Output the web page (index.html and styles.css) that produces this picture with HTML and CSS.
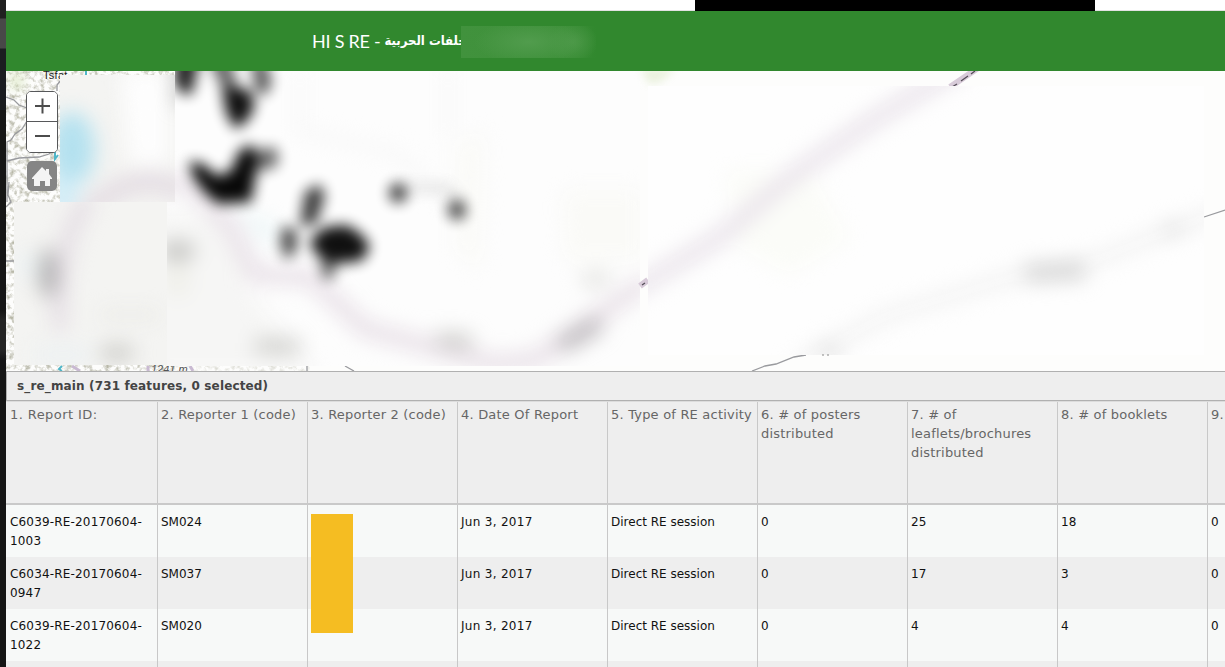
FILE: index.html
```html
<!DOCTYPE html>
<html lang="en">
<head>
<meta charset="utf-8">
<title>HI S RE</title>
<link rel="stylesheet" href="styles.css">
</head>
<body>
<div class="shell">
  <aside class="edge"></aside>
  <main class="app">
    <div class="topstrip"><div class="topstrip-block"></div></div>
    <header class="banner">
      <h1 class="title"><span class="title-latin">HI S RE -</span><span class="title-arabic" dir="rtl" lang="ar">خلفات الحربية</span></h1>
      <div class="title-haze"></div>
    </header>
    <section class="map">
      <svg class="map-canvas" viewBox="6 71 1219 300" color-interpolation-filters="sRGB" aria-hidden="true">
        <defs>
          <filter id="b3" x="-50%" y="-50%" width="200%" height="200%"><feGaussianBlur stdDeviation="4"/></filter>
          <filter id="b5" filterUnits="userSpaceOnUse" x="100" y="0" width="450" height="350"><feGaussianBlur stdDeviation="7"/></filter>
          <filter id="b9" filterUnits="userSpaceOnUse" x="-50" y="0" width="1400" height="450"><feGaussianBlur stdDeviation="10"/></filter>
          <filter id="terrain" x="0" y="0" width="100%" height="100%">
            <feTurbulence type="fractalNoise" baseFrequency=".2" numOctaves="4" seed="7"/>
            <feColorMatrix values="0 0 0 0 .72  0 0 0 0 .72  0 0 0 0 .66  2.6 0 0 0 -1.15"/>
          </filter>
          <clipPath id="upper"><path d="M60 75H175V202H60z"/></clipPath>
          <clipPath id="lower"><path d="M14 202H167V365H14z"/></clipPath>
          <clipPath id="mid"><path d="M175 71H640V366H167V202H175z"/></clipPath>
          <clipPath id="east"><path d="M648 86H1204V355H648z"/></clipPath>
        </defs>
        <path fill="#fdfdfc" d="M6 71H1225V371H6z"/>
        <path filter="url(#terrain)" d="M6 71H175V371H6z"/>
        <path filter="url(#terrain)" opacity=".45" d="M167 365H310V371H167z"/>
        <path fill="#dce8c4" opacity=".55" filter="url(#b3)" d="M8 71H25V90H8z"/>
        <g fill="none" stroke="#999a9e" stroke-width="1.3">
          <path d="M6 97l8 3 5 5 8 3M27 121l-5 8-7 5-4 6-4 2v60M7 161l12-3 20-1 10-3 6-6M61 80l-4 5v6M9 182l-1 13 3 7-5 5M6 261h8M345 366l9 5M307 366v5M752 371l13-5 11-2 18-7 12-2M1204 217l21-7"/>
        </g>
        <path fill="none" stroke="#4fb6c8" stroke-width="2" d="M86 71v5M55 152v7l3-4M62 366l-3 3 3 2"/>
        <path d="M72 366l8 5M148 366v5M190 366l3 5" stroke="#c9bad2" stroke-width="3"/>
        <text class="map-town" x="43" y="79">Tsfat</text>
        <text class="map-height" x="151" y="373">1241 m</text>

        <g clip-path="url(#upper)">
          <path fill="#f4f4f2" d="M60 75H175V202H60z"/>
          <g filter="url(#b9)">
            <path fill="#fdfdfd" d="M120 70H170V165H130z"/>
            <ellipse cx="72" cy="149" rx="23" ry="37" fill="#b4e1ef"/>
            <path d="M50 177H82L71 220H50z" fill="#cfecf7"/>
            <path d="M84 215Q135 162 190 194" fill="none" stroke="#e2dae1" stroke-width="17"/>
            <path d="M181 60v45" stroke="#999" stroke-width="8"/>
          </g>
        </g>
        <g clip-path="url(#lower)">
          <path fill="#f4f4f2" d="M0 202H167V365H0z"/>
          <g filter="url(#b9)">
            <path d="M90 198Q55 240 60 330" fill="none" stroke="#e2dae2" stroke-width="13"/>
            <ellipse cx="48" cy="273" rx="9" ry="25" fill="#adadad"/>
            <ellipse cx="28" cy="265" rx="14" ry="13" fill="#edf2f3"/>
            <ellipse cx="117" cy="353" rx="18" ry="9" fill="#cdcdc9"/>
            <path d="M35 345H90V365H35z" fill="#edf1f2"/>
            <path d="M100 315H160" stroke="#e8e8e3" stroke-width="8"/>
          </g>
        </g>
        <g clip-path="url(#mid)">
          <path fill="#fdfdfd" d="M167 71H640V366H167z"/>
          <g filter="url(#b9)">
            <path fill="#f6f6f5" d="M150 210L225 215 250 290 320 375H150z"/>
            <path d="M160 177L195 190 230 225 255 275 310 277 365 329 495 364 535 360 648 281" fill="none" stroke="#e8e0e7" stroke-width="16"/>
            <path fill="#eef7f8" d="M230 205L280 225 270 250z"/>
            <ellipse cx="178" cy="251" rx="17" ry="10" fill="#c2c2bf"/>
            <ellipse cx="178" cy="280" rx="12" ry="18" fill="#efefe9"/>
            <path d="M255 346h45M437 339l35 3" stroke="#cececb" stroke-width="14"/>
            <path d="M560 346l40-23" stroke="#bbb7bb" stroke-width="16"/>
            <ellipse cx="596" cy="279" rx="15" ry="8" fill="#e2e2df"/>
            <path fill="#fafaf7" d="M455 145L485 130 480 270 455 250zM563 190H642V260H565z"/>
            <path d="M300 72v60l95 20 60 55M448 72v65" fill="none" stroke="#f7f7f7" stroke-width="7"/>
          </g>
          <g filter="url(#b5)" fill="#000" opacity=".97">
            <path opacity=".9" d="M176 55H200L192 94 182 94 174 82z"/>
            <path opacity=".65" d="M207 55H229L238 90 222 88z"/>
            <path opacity=".68" d="M251 58H264L272 82 266 95 256 93z"/>
            <path opacity=".97" d="M222 88L249 89 255 106 247 121 235 129 226 113z"/>
            <path d="M189 161L203 164 217 176 231 171 239 151 251 144 258 162 251 202 218 204 205 193 193 177z"/>
            <path opacity=".6" d="M252 150L276 147 279 163 267 171 254 167z"/>
            <path opacity=".8" d="M305 192L319 184 325 195 316 224 300 226z"/>
            <path opacity=".72" d="M283 225L297 231 297 250 286 260 280 244z"/>
            <path opacity=".97" d="M310 240L325 227 347 225 361 234 370 246 363 260 346 263 327 261 314 252z"/>
            <path opacity=".6" d="M320 258H340L331 281 322 277z"/>
            <ellipse cx="398" cy="193" rx="9" ry="10" opacity=".78"/>
            <ellipse cx="457" cy="210" rx="9" ry="10" opacity=".74"/>
            <path d="M403 188h45l9 12" fill="none" stroke="#777" stroke-width="6" opacity=".25"/>
          </g>
        </g>
        <path fill="#dde9c9" opacity=".6" filter="url(#b3)" d="M640 68h36l-15 14-12 2z"/>
        <path d="M640 286l8-6M950 87l28-19" stroke="#d8cbd9" stroke-width="6"/>
        <path d="M642 285l3-2M952 87l5-3M961 81l7-5M971 74l4-3" stroke="#554e58" stroke-width="1.3"/>
        <g clip-path="url(#east)">
          <path fill="#fefefe" d="M648 86H1204V355H648z"/>
          <g filter="url(#b9)">
            <path fill="#fbfcf8" d="M725 170H810L850 240 790 275 735 245z"/>
            <path d="M610 304L720 237 792 176 875 119 965 65" fill="none" stroke="#eae4eb" stroke-width="17"/>
            <path d="M795 365L885 316 1010 278 1090 262 1225 209" fill="none" stroke="#f3f3f3" stroke-width="14"/>
            <path d="M1025 273l60-3" stroke="#d7d7d7" stroke-width="19"/>
            <ellipse cx="1173" cy="229" rx="12" ry="7" fill="#e1e1e1"/>
            <ellipse cx="829" cy="351" rx="12" ry="7" fill="#dedede"/>
          </g>
        </g>
        <path d="M823 354v2M828 354v2" stroke="#888"/>
      </svg>
      <div class="controls">
        <div class="zoom">
          <button class="zoom-btn" aria-label="Zoom in"><svg width="30" height="30"><path d="M8 14h15M15.5 6.5v15"/></svg></button>
          <button class="zoom-btn" aria-label="Zoom out"><svg width="30" height="30"><path d="M8 14h15"/></svg></button>
        </div>
        <button class="home" aria-label="Default extent"><svg width="30" height="30"><path d="M15 6l4 4V8h3v5l3 4v1h-2v7h-5v-5h-5v5H7v-7H5v-1z"/></svg></button>
      </div>
    </section>
    <section class="features">
      <div class="caption">s_re_main (731 features, 0 selected)</div>
      <div class="row head">
        <div class="cell">1. Report ID:</div><div class="cell">2. Reporter 1 (code)</div><div class="cell">3. Reporter 2 (code)</div><div class="cell">4. Date Of Report</div><div class="cell">5. Type of RE activity</div><div class="cell">6. # of posters<br>distributed</div><div class="cell">7. # of<br>leaflets/brochures<br>distributed</div><div class="cell">8. # of booklets</div><div class="cell">9.</div>
      </div>
      <div class="body">
        <div class="row">
          <div class="cell id">C6039-RE-20170604-<br>1003</div><div class="cell">SM024</div><div class="cell"></div><div class="cell date">Jun 3, 2017</div><div class="cell">Direct RE session</div><div class="cell">0</div><div class="cell">25</div><div class="cell">18</div><div class="cell">0</div>
        </div>
        <div class="row alt">
          <div class="cell id">C6034-RE-20170604-<br>0947</div><div class="cell">SM037</div><div class="cell"></div><div class="cell date">Jun 3, 2017</div><div class="cell">Direct RE session</div><div class="cell">0</div><div class="cell">17</div><div class="cell">3</div><div class="cell">0</div>
        </div>
        <div class="row">
          <div class="cell id">C6039-RE-20170604-<br>1022</div><div class="cell">SM020</div><div class="cell"></div><div class="cell date">Jun 3, 2017</div><div class="cell">Direct RE session</div><div class="cell">0</div><div class="cell">4</div><div class="cell">4</div><div class="cell">0</div>
        </div>
        <div class="row alt">
          <div class="cell"></div><div class="cell"></div><div class="cell"></div><div class="cell"></div><div class="cell"></div><div class="cell"></div><div class="cell"></div><div class="cell"></div><div class="cell"></div>
        </div>
        <div class="mask"></div>
      </div>
    </section>
  </main>
</div>
</body>
</html>
```
FILE: styles.css
```css
* { box-sizing: border-box; }
body { margin: 0; overflow: hidden; font-family: Verdana, "DejaVu Sans", sans-serif; }
.shell { display: grid; grid-template-columns: 6px 1219px; height: 667px; }
.edge { background: linear-gradient(#202020 0 18px, #484848 19px 48px, #1b1d20 49px 110px, #161616 110px 310px, #252525 320px 350px, #151515 360px); }
.app { display: flex; flex-direction: column; overflow: hidden; background: #fff; }
.topstrip { height: 11px; flex: none; border-bottom: 1px solid #e2e2e2; padding-left: 689px; }
.topstrip-block { width: 400px; height: 11px; background: #000; }
.banner { position: relative; flex: none; height: 60px; padding-left: 306px; background: #31882e; }
.title { margin: 0; display: flex; gap: 4px; color: #fff; font: 18px/60px "Open Sans", sans-serif; white-space: nowrap; }
.title-latin { font-family: Lato, sans-serif; letter-spacing: -.25px; }
.title-arabic { font: bold 13px/60px "DejaVu Sans Condensed", "DejaVu Sans", sans-serif; }
.title-haze { position: absolute; left: 455px; top: 15px; width: 135px; height: 32px; background: radial-gradient(ellipse 55px 22px at 68px 16px, #519c4d, transparent), radial-gradient(ellipse 25px 20px at 112px 16px, #4b9847, transparent), linear-gradient(90deg, #41923d, #3e903a 75%, #31882e); }
.map { position: relative; flex: none; height: 300px; overflow: hidden; }
.map-canvas { display: block; width: 1219px; height: 300px; }
.map-town { font: 11px "Liberation Sans", sans-serif; letter-spacing: .3px; fill: #222; }
.map-height { font: italic 11px "Liberation Sans", sans-serif; fill: #555; }
.controls { position: absolute; left: 20px; top: 20px; display: flex; flex-direction: column; gap: 8px; }
.zoom { width: 32px; height: 62px; border: 1px solid #57585a; border-radius: 5px; background: #fff; overflow: hidden; }
.zoom-btn { display: block; width: 30px; height: 30px; padding: 0; border: 0; background: #fff; }
.zoom-btn + .zoom-btn { border-top: 1px solid #57585a; margin-top: -1px; height: 31px; }
.zoom-btn svg, .home svg { display: block; }
.zoom-btn path { stroke: #4c4c4c; stroke-width: 2; }
.home { width: 30px; height: 30px; margin-left: 1px; padding: 0; border: 0; border-radius: 5px; background: #858585; }
.home path { fill: #f4f4f4; }
.features { flex: 1; min-height: 0; }
.caption { height: 30px; padding-left: 10px; border: 1px solid #b0b0b0; border-right: 0; background: #eee; color: #444; font-size: 12px; font-weight: bold; line-height: 29px; letter-spacing: .14px; }
.row { display: grid; grid-template-columns: 152px repeat(8, 150px); height: 52px; background: #f7f9f8; }
.alt { background: #eee; }
.cell { padding: 8px 3px 0; border-right: 1px solid #c8c8c8; color: #111; font-size: 12px; line-height: 19px; white-space: nowrap; }
.cell:first-child { padding-left: 4px; }
.id { letter-spacing: .17px; }
.date { letter-spacing: .3px; }
.head { height: 104px; background: #eee; border-top: 1px solid #dcdcdc; border-bottom: 2px solid #c9c9c9; }
.head .cell { padding-top: 3px; color: #666; font-size: 13px; letter-spacing: .2px; }
.head .cell:first-child { letter-spacing: .42px; }
.body { position: relative; }
.mask { position: absolute; left: 305px; top: 9px; width: 42px; height: 119px; background: #f5bd22; }
```
